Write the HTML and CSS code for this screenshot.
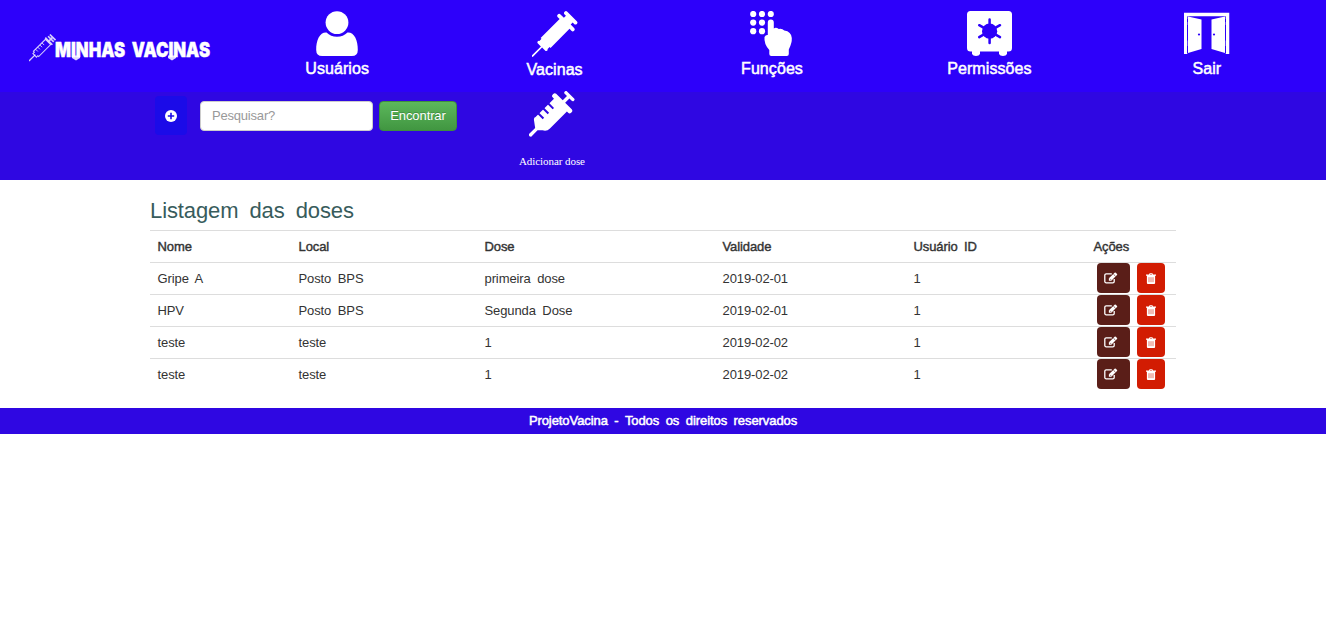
FILE: index.html
```html
<!DOCTYPE html>
<html lang="pt-BR">
<head>
<meta charset="utf-8">
<title>Minhas Vacinas</title>
<link rel="stylesheet" href="styles.css">
</head>
<body>
<svg width="0" height="0" class="defs">
  <symbol id="edit" viewBox="0 0 14 12"><path d="M10.200 7v2.400a1.400 1.400 0 0 1-1.400 1.400H2.200A1.400 1.400 0 0 1 .8 9.400V3.200a1.400 1.400 0 0 1 1.400-1.400h5.600" fill="none" stroke="#fff" stroke-width="1.300"/><path d="M4.900 8.700V6.300L10.600.7q.6-.5 1.200 0L13 1.900q.5.600 0 1.200L7.300 8.700z" fill="#fff"/><path d="M6 6.800l1 1M9.400 2.100l2.100 2.100" stroke="#5a1e18" stroke-width=".7"/></symbol>
  <symbol id="trash" viewBox="0 0 10 11"><path d="M3 1.500L3.600.2h2.800L7 1.500h3v1.300H9.100V10q0 1-1 1H1.900q-1 0-1-1V2.800H0V1.500zm1 0h2L5.800 1H4.200z" fill="#fff"/><path d="M3 4.200v5M5 4.200v5M7 4.200v5" stroke="#d21c02" stroke-width=".6"/></symbol>
</svg>
<header class="nav">
  <a class="brand">
    <svg width="196" height="40" viewBox="0 0 196 40">
      <g transform="translate(0 32) rotate(-45)" fill="none" stroke="#fff" stroke-opacity=".8">
        <path d="M0 0h9" stroke-width="1.300"/><path d="M8-2.500h2v-1.200h17v7.400H10V2.500H8z" stroke-width="1.100"/>
        <path d="M13-3.500v3M16-3.500v3M19-3.500v3M22-3.500v3" stroke-width=".9"/><path d="M28-5v10M31-4v8M33.500-4v8M27 0h7" stroke-width="1.700"/>
      </g>
      <text x="26" y="27.500" textLength="155" lengthAdjust="spacingAndGlyphs" class="logo-text">MINHAS VACINAS</text>
      <path d="M43 26.500h8v2.500l-4 2.500-4-2.500zM139 26.500h8v2.500l-4 2.500-4-2.500z" fill="#fff" opacity=".85"/>
    </svg>
  </a>
  <nav class="menu">
    <a class="item"><svg width="46" height="46" viewBox="0 0 46 46" fill="#fff"><circle cx="22" cy="11.600" r="11.400"/><path d="M11.500 21.500q4.200 4.200 10.500 4.200t10.500-4.200C39 21 43 29 42.800 39q0 6-6 6H7.200q-6 0-6-6C1 29 5 21 11.500 21.500z"/></svg><span>Usuários</span></a>
    <a class="item low"><svg width="46" height="46" viewBox="0 0 46 46" fill="#fff"><g transform="translate(0 45.500) rotate(-45) scale(.96)"><path d="M0-.9h14V-6q1.500-2 3 0h3v-1.300h28V-10q0-2 2-2t2 2v5h3V-7q0-2 2-2t2 2V7q0 2-2 2t-2-2V5h-3v5q0 2-2 2t-2-2V7.300H20V6h-3q-1.500 2-3 0V.9H0z"/></g></svg><span>Vacinas</span></a>
    <a class="item"><svg width="46" height="46" viewBox="0 0 46 46" fill="#fff"><circle cx="4.200" cy="3" r="3.100"/><circle cx="13" cy="3" r="3.100"/><circle cx="21.800" cy="3" r="3.100"/><circle cx="4.200" cy="11.600" r="3.100"/><circle cx="13" cy="11.600" r="3.100"/><circle cx="4.200" cy="20.200" r="3.100"/><circle cx="13" cy="20.200" r="3.100"/><path d="M18.800 11.500a3 3 0 0 1 6 0v6q2-1.800 5 .5 3-1 5.500 1.500 7 1 7.500 7.500.3 5-3 11.500V43q0 2-2 2H22.300q-2 0-2-2v-4q-5.500-6-4.800-13 1.300-2.500 3.300-2z"/></svg><span>Funções</span></a>
    <a class="item"><svg width="46" height="46" viewBox="0 0 46 46"><path d="M3.500 0h38a3.500 3.500 0 0 1 3.500 3.500v33.500a3.500 3.500 0 0 1-3.500 3.500H40V43q-1 2-4 2t-4-2v-2.500H13V43q-1 2-4 2t-4-2v-2.500H3.500A3.500 3.500 0 0 1 0 37V3.500A3.500 3.500 0 0 1 3.500 0z" fill="#fff"/><circle cx="22.600" cy="20.200" r="7.600" fill="#2d00fa"/><path d="M22.600 8.500v23.500M12.200 14.200l20.800 12M33 14.200L12.200 26.200" stroke="#2d00fa" stroke-width="2.500" stroke-linecap="round"/></svg><span>Permissões</span></a>
    <a class="item"><svg width="46" height="46" viewBox="0 0 46 46"><path d="M1.500 43V3.500h42V43" fill="none" stroke="#fff" stroke-width="3.500"/><path d="M4 5.500l13.500 3v29.600L4 42zM41 5.500l-13.500 3v29.600L41 42z" fill="#fff"/><path d="M3.500 8v3M3.500 14v15.500M3.500 35v7M41.500 8v3M41.500 14v15.500M41.500 35v7" stroke="#2d00fa" stroke-width="1"/><circle cx="15" cy="23.500" r="1.100" fill="#2d00fa"/><circle cx="30" cy="23.500" r="1.100" fill="#2d00fa"/></svg><span>Sair</span></a>
  </nav>
</header>
<section class="toolbar">
  <button class="add"><svg width="12" height="12" viewBox="0 0 12 12"><circle cx="6" cy="6" r="6" fill="#fff"/><path d="M6 2.800v6.400M2.800 6h6.400" stroke="#1b0be8" stroke-width="1.600"/></svg></button>
  <input class="search" type="text" placeholder="Pesquisar?">
  <button class="find">Encontrar</button>
  <a class="dose"><svg width="46" height="46" viewBox="0 0 46 46"><g transform="translate(1 44.500) rotate(-45)"><path d="M0-1.700h9l5-6.800q1.500-1.500 3-.6h26V-11q0-2 2.500-2t2.500 2v9.300h6V-5q0-1.500 1.700-1.500T57.400-5V5q0 1.500-1.700 1.500T54 5V1.700h-6V11q0 2-2.500 2T43 11V9.200H19q-4.500 0-6.500-4L9 1.700H0q-1.700-1.700 0-3.400z" fill="#fff"/><path d="M21.500-10v7.500M28.500-10v7.500M35.500-10v7.500" stroke="#2f07e2" stroke-width="2"/></g></svg><span>Adicionar dose</span></a>
</section>
<main class="content">
  <h1>Listagem das doses</h1>
  <table>
    <colgroup><col class="c1"><col class="c2"><col class="c3"><col class="c4"><col class="c5"><col></colgroup>
    <tr><th>Nome</th><th>Local</th><th>Dose</th><th>Validade</th><th>Usuário ID</th><th>Ações</th></tr>
    <tr><td>Gripe A</td><td>Posto BPS</td><td>primeira dose</td><td>2019-02-01</td><td>1</td><td class="actions"><div><button class="edit"><svg width="14" height="12"><use href="#edit"/></svg></button><button class="del"><svg width="10" height="11"><use href="#trash"/></svg></button></div></td></tr>
    <tr><td>HPV</td><td>Posto BPS</td><td>Segunda Dose</td><td>2019-02-01</td><td>1</td><td class="actions"><div><button class="edit"><svg width="14" height="12"><use href="#edit"/></svg></button><button class="del"><svg width="10" height="11"><use href="#trash"/></svg></button></div></td></tr>
    <tr><td>teste</td><td>teste</td><td>1</td><td>2019-02-02</td><td>1</td><td class="actions"><div><button class="edit"><svg width="14" height="12"><use href="#edit"/></svg></button><button class="del"><svg width="10" height="11"><use href="#trash"/></svg></button></div></td></tr>
    <tr><td>teste</td><td>teste</td><td>1</td><td>2019-02-02</td><td>1</td><td class="actions"><div><button class="edit"><svg width="14" height="12"><use href="#edit"/></svg></button><button class="del"><svg width="10" height="11"><use href="#trash"/></svg></button></div></td></tr>
  </table>
</main>
<footer class="footer">ProjetoVacina - Todos os direitos reservados</footer>
</body>
</html>
```
FILE: styles.css
```css
* { box-sizing: border-box; }
body { margin: 0; background: #fff; color: #333; font: 13px/18px "Liberation Sans", Arial, sans-serif; }
svg { display: block; }
.defs { position: absolute; }
button { border: 0; padding: 0; font: inherit; display: block; }
.nav { height: 92px; background: #2d00fa; display: flex; }
.brand { width: 229px; padding: 29px 0 0 29px; }
.logo-text { font: 900 20px Inter, "DejaVu Sans", sans-serif; word-spacing: 4px; fill: #fff; stroke: #fff; stroke-width: .4px; }
.menu { width: 1087px; display: grid; grid-template-columns: repeat(5, 1fr); }
.item { display: flex; flex-direction: column; align-items: center; padding-top: 11px; color: #fff; font-size: 16px; line-height: 20px; -webkit-text-stroke: .5px #fff; }
.item svg { -webkit-text-stroke: 0; }
.item span { margin: 2px 1px 0 0; letter-spacing: .07px; }
.item.low span { margin-top: 3px; }
.toolbar { height: 88px; background: #2f07e2; display: flex; align-items: flex-start; padding-left: 155px; }
.add { width: 32px; height: 39px; margin-top: 4px; border-radius: 4px; background: #1b0be8; display: flex; align-items: center; justify-content: center; }
.search { width: 173px; height: 30px; margin: 9px 6px 0 13px; border: 1px solid #ccc; border-radius: 4px; padding: 0 11px 2px; font: 13px "Liberation Sans", Arial, sans-serif; letter-spacing: -.2px; background: #fff; }
.search::placeholder { color: #999; opacity: 1; }
.find { width: 78px; height: 30px; margin-top: 9px; border: 1px solid #3e8f3e; border-radius: 4px; background: linear-gradient(#5cb85c, #419641); color: #fff; letter-spacing: -.1px; text-shadow: 0 -1px 0 rgba(0,0,0,.2); }
.dose { margin: -1px 0 0 62px; color: #fff; display: flex; flex-direction: column; align-items: center; font: 11px/14px "Liberation Serif", "Times New Roman", serif; letter-spacing: -.07px; }
.dose span { margin-top: 17px; white-space: nowrap; }
.content { width: 1026px; height: 228px; margin: 0 auto; padding-top: 17px; }
h1 { margin: 0; height: 33px; font-size: 22px; line-height: 28px; font-weight: 400; letter-spacing: -.1px; word-spacing: 5px; color: #385c5c; }
table { width: 1026px; table-layout: fixed; border-collapse: collapse; word-spacing: 3px; letter-spacing: -.1px; }
.c1 { width: 141px; }
.c2 { width: 186px; }
.c3 { width: 238px; }
.c4 { width: 191px; }
.c5 { width: 180px; }
th, td { height: 32px; padding: 0 7px 0 7.5px; border-top: 1px solid #ddd; text-align: left; font-weight: 400; vertical-align: middle; }
th { -webkit-text-stroke: .4px #333; }
td.actions { padding: 0 0 0 11px; vertical-align: top; }
.actions div { display: flex; gap: 7px; }
.edit, .del { height: 30px; border-radius: 4px; display: flex; align-items: center; justify-content: center; }
.edit { width: 33px; background: #5a1e18; padding-right: 6px; }
.del { width: 28px; background: #d21c02; }
.footer { height: 26px; line-height: 26px; background: #2f07e2; color: #fff; text-align: center; letter-spacing: -.08px; word-spacing: 3px; -webkit-text-stroke: .5px #fff; }
```
